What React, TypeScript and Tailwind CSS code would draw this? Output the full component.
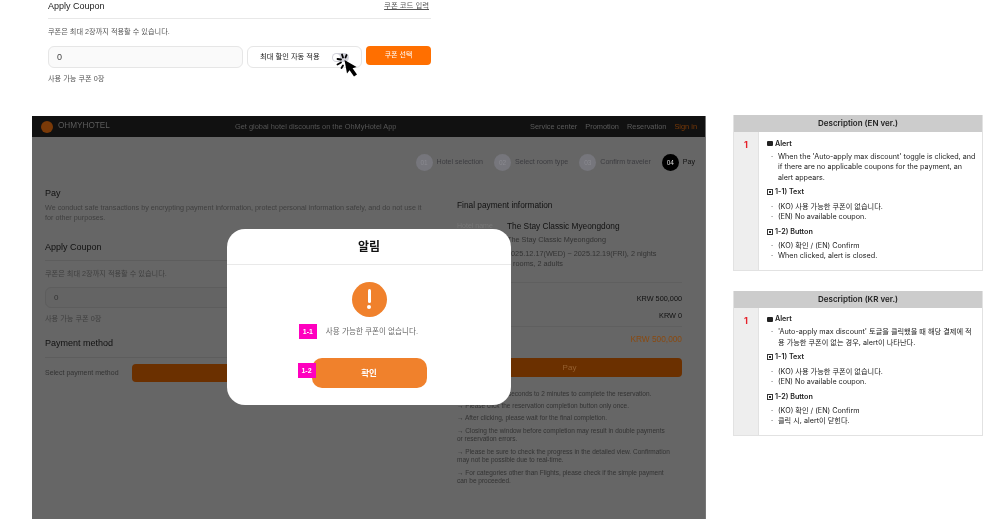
import React from "react";

const kr = "font-['Liberation_Sans','Noto_Sans_CJK_KR',sans-serif]";
const inter = "font-['Inter','Noto_Sans_CJK_KR',sans-serif]";

function Cursor() {
  return (
    <svg className="absolute left-[303px] top-[52px]" width="28" height="28" viewBox="0 0 28 28">
      <path d="M9.5 8 L12 21.5 L14.6 18.2 L19 24.5 L22 22.4 L17.6 16.2 L21.6 15 Z" fill="#000" />
      <g stroke="#000" strokeWidth="1.8" strokeLinecap="round">
        <path d="M7 2.5 L8 5.5" />
        <path d="M11.5 3 L10.5 5.5" />
        <path d="M2.5 7 L6 7.5" />
        <path d="M2.5 12.5 L6 10.5" />
        <path d="M6.5 16 L8 13.5" />
      </g>
    </svg>
  );
}

function CouponTop() {
  return (
    <section className={`ml-4 w-[383px] h-[116px] text-[#222] ${kr}`}>
      <div className="flex justify-between h-[19px] border-b border-[#e8e8e8] text-[9px] leading-[11px]">
        <span className="leading-[12px]">Apply Coupon</span>
        <span className="mr-[2px] text-[7.4px] leading-[12px] underline text-[#555]">쿠폰 코드 입력</span>
      </div>
      <p className="mt-[8px] text-[7.2px] leading-[10px] text-[#555]">쿠폰은 최대 2장까지 적용할 수 있습니다.</p>
      <div className="flex mt-[9px] gap-[4px] items-start">
        <div className="w-[195px] h-[22px] border border-[#e6e6e6] bg-[#fafafa] rounded-[6px] pl-[8px] text-[9px] leading-[20px] text-[#444]">0</div>
        <div className="w-[115px] h-[22px] border border-[#e6e6e6] rounded-[6px] flex items-center pl-[12px] text-[7.3px]">
          최대 할인 자동 적용
          <span className="ml-[12px] w-[17px] h-[9px] rounded-full bg-[#d4d4dc] flex items-center">
            <span className="ml-[1px] w-[7px] h-[7px] rounded-full bg-white" />
          </span>
        </div>
        <div className="w-[65px] h-[19px] bg-[#ff6f00] rounded-[4px] text-white text-[7px] leading-[18px] text-center">쿠폰 선택</div>
      </div>
      <p className="mt-[6px] text-[7.2px] leading-[10px] text-[#555]">사용 가능 쿠폰 0장</p>
    </section>
  );
}

function Step({ n, label, active }: { n: string; label: string; active?: boolean }) {
  return (
    <div className="flex items-center gap-[4px]">
      <span className={`w-[17px] h-[17px] rounded-full flex items-center justify-center text-[6.5px] ${active ? "bg-black text-[#ddd]" : "bg-[#76767c] text-[#8a8a90]"}`}>{n}</span>
      <span className={`text-[7.1px] ${active ? "text-[#111]" : "text-[#3c3c40]"}`}>{label}</span>
    </div>
  );
}

function Modal() {
  return (
    <div className={`absolute left-[195px] top-[113px] w-[284px] h-[176px] bg-white rounded-[18px] flex flex-col items-center ${kr}`}>
      <div className="w-full h-[36px] border-b border-[#e9e9e9] text-center text-[12px] font-bold leading-[36px] text-[#111]">알림</div>
      <div className="mt-[17px] w-[35px] h-[35px] rounded-full bg-[#f0812c] flex flex-col items-center pt-[7px]">
        <span className="w-[3px] h-[14px] rounded-full bg-white" />
        <span className="mt-[2px] w-[3.5px] h-[3.5px] rounded-full bg-white" />
      </div>
      <div className="mt-[7px] h-[15px] flex items-center relative">
        <span className="text-[7.6px] text-[#6b6b6b] ml-[6px]">사용 가능한 쿠폰이 없습니다.</span>
        <span className="absolute left-[-21px] top-0 w-[18px] h-[15px] bg-[#ff00bf] text-white text-[7px] font-bold leading-[15px] text-center">1-1</span>
      </div>
      <div className="relative mt-[19px] w-[115px] h-[30px] bg-[#f0812c] rounded-[10px] text-white text-[8.5px] font-bold leading-[30px] text-center">
        확인
        <span className="absolute left-[-14px] top-[5px] w-[18px] h-[15px] bg-[#ff00bf] text-white text-[7px] font-bold leading-[15px] text-center">1-2</span>
      </div>
    </div>
  );
}

function Screen() {
  const notes = [
    "→ It may take 30 seconds to 2 minutes to complete the reservation.",
    "→ Please click the reservation completion button only once.",
    "→ After clicking, please wait for the final completion.",
    "→ Closing the window before completion may result in double payments or reservation errors.",
    "→ Please be sure to check the progress in the detailed view. Confirmation may not be possible due to real-time.",
    "→ For categories other than Flights, please check if the simple payment can be proceeded.",
  ];
  return (
    <section className={`relative w-[674px] h-[403px] bg-[#666] border-r border-[#777] text-[#111] ${kr}`}>
      <header className="h-[21px] bg-[#111] flex items-center pl-[9px] pr-[8px] text-[7.4px] text-[#555]">
        <span className="w-[12px] h-[12px] rounded-full bg-[#7a3a08]" />
        <span className="ml-[5px] w-[52px] whitespace-nowrap text-[8.2px] text-[#5c5c5c]">OHMYHOTEL</span>
        <span className="ml-[125px] text-[#565656]">Get global hotel discounts on the OhMyHotel App</span>
        <nav className="ml-auto flex gap-[8px] text-[#5c5c5c]">
          <span>Service center</span>
          <span>Promotion</span>
          <span>Reservation</span>
          <span className="text-[#7a3a08]">Sign in</span>
        </nav>
      </header>

      <div className="flex justify-end gap-[11px] pr-[10px] mt-[17px]">
        <Step n="01" label="Hotel selection" />
        <Step n="02" label="Select room type" />
        <Step n="03" label="Confirm traveler" />
        <Step n="04" label="Pay" active />
      </div>

      <div className="flex mt-[6px] pl-[13px]">
        <div className="w-[386px]">
          <h2 className="mt-[10px] text-[9px] leading-[12px]">Pay</h2>
          <p className="mt-[4px] text-[7.2px] leading-[10px] text-[#3f3f3f] w-[378px]">
            We conduct safe transactions by encrypting payment information, protect personal information safely, and do not use it for other purposes.
          </p>
          <div className="mt-[18px] h-[20px] border-b border-[#5d5d5d] text-[9px] leading-[12px]">Apply Coupon</div>
          <p className="mt-[8px] text-[7.2px] leading-[10px] text-[#3f3f3f]">쿠폰은 최대 2장까지 적용할 수 있습니다.</p>
          <div className="mt-[8px] h-[21px] w-[195px] border border-[#5d5d5d] bg-[#646464] rounded-[6px] pl-[8px] text-[8px] leading-[19px] text-[#333]">0</div>
          <p className="mt-[6px] text-[7.2px] leading-[10px] text-[#3f3f3f]">사용 가능 쿠폰 0장</p>
          <div className="mt-[13px] h-[21px] border-b border-[#5d5d5d] text-[9px] leading-[12px]">Payment method</div>
          <div className="mt-[6px] flex items-center">
            <span className="w-[87px] text-[7px] text-[#333]">Select payment method</span>
            <span className="h-[18px] flex-1 bg-[#6b3000] rounded-[4px]" />
          </div>
        </div>

        <div className="ml-[26px] w-[225px]">
          <h2 className="mt-[22px] text-[8.3px] leading-[12px]">Final payment information</h2>
          <div className="mt-[9px] flex text-[8.3px] leading-[12px]">
            <span className="w-[50px] text-[#777] text-[7px]">Hotel name</span>
            <span>The Stay Classic Myeongdong</span>
          </div>
          <div className="mt-[3px] ml-[50px] text-[7.3px] leading-[10.5px] text-[#333]">
            <p>The Stay Classic Myeongdong</p>
            <p className="mt-[3px]">2025.12.17(WED) ~ 2025.12.19(FRI), 2 nights</p>
            <p>1 rooms, 2 adults</p>
          </div>
          <div className="mt-[12px] border-t border-[#5f5f5f] pt-[10px] flex justify-end text-[7.3px] leading-[11px]">KRW 500,000</div>
          <div className="mt-[6px] flex justify-end text-[7.3px] leading-[11px]">KRW 0</div>
          <div className="mt-[5px] pt-[6px] border-t border-[#5f5f5f] flex justify-between text-[8.3px] leading-[12px]">
            <span>Total amount</span>
            <span className="text-[#8a4a10]">KRW 500,000</span>
          </div>
          <div className="mt-[13px] h-[19px] bg-[#6b3000] rounded-[4px] text-center text-[8px] leading-[19px] text-[#95602f]">Pay</div>
          <div className="mt-[13px] w-[214px] flex flex-col gap-[4.2px] text-[6.5px] leading-[8.3px] text-[#333]">
            {notes.map((n) => (
              <p key={n}>{n}</p>
            ))}
          </div>
        </div>
      </div>

      <Modal />
    </section>
  );
}

function Bullet({ children }: { children: React.ReactNode }) {
  return (
    <li className="flex pl-[4px]">
      <span className="w-[7px] shrink-0">·</span>
      <span>{children}</span>
    </li>
  );
}

function Box() {
  return (
    <span className="w-[6px] h-[6px] border-[0.7px] border-[#333] flex items-center justify-center mr-[1px]">
      <span className="w-[2px] h-[2px] bg-[#333]" />
    </span>
  );
}

function Desc({ title, intro, close }: { title: string; intro: React.ReactNode; close: string }) {
  return (
    <section className={`w-[250px] border border-[#e2e2e2] border-t-0 text-[#222] ${inter}`}>
      <div className="h-[17px] bg-[#cccccc] text-center text-[8px] font-semibold leading-[17px]">{title}</div>
      <div className="flex">
        <div className="w-[25px] bg-[#eeeeee] border-r border-[#e2e2e2] pt-[7px] text-center text-[9px] font-bold leading-[11px] text-[#e6212a]">1</div>
        <div className="flex-1 pl-[8px] pr-[6px] pt-[6.5px] pb-[8px] text-[7.2px] leading-[10.5px]">
          <p className="font-semibold flex items-center gap-[2px]"><span className="w-[6px] h-[5px] bg-[#222] rounded-[1px]" />Alert</p>
          <ul className="mt-[2.5px]">
            <Bullet>{intro}</Bullet>
          </ul>
          <p className="mt-[3.5px] font-semibold flex items-center gap-[1px]"><Box />1-1) Text</p>
          <ul className="mt-[4.5px]">
            <Bullet>(KO) 사용 가능한 쿠폰이 없습니다.</Bullet>
            <Bullet>(EN) No available coupon.</Bullet>
          </ul>
          <p className="mt-[4px] font-semibold flex items-center gap-[1px]"><Box />1-2) Button</p>
          <ul className="mt-[3.5px]">
            <Bullet>(KO) 확인 / (EN) Confirm</Bullet>
            <Bullet>{close}</Bullet>
          </ul>
        </div>
      </div>
    </section>
  );
}

export default function App() {
  return (
    <div className="w-[1001px] h-[527px] bg-white overflow-hidden flex blur-[0.3px]">
      <div className="relative ml-[32px] w-[674px]">
        <CouponTop />
        <Screen />
        <Cursor />
      </div>
      <div className="ml-[27px] pt-[115px] flex flex-col gap-[20px]">
        <Desc
          title="Description (EN ver.)"
          intro="When the 'Auto-apply max discount' toggle is clicked, and if there are no applicable coupons for the payment, an alert appears."
          close="When clicked, alert is closed."
        />
        <Desc
          title="Description (KR ver.)"
          intro="'Auto-apply max discount' 토글을 클릭했을 때 해당 결제에 적용 가능한 쿠폰이 없는 경우, alert이 나타난다."
          close="클릭 시, alert이 닫힌다."
        />
      </div>
    </div>
  );
}
